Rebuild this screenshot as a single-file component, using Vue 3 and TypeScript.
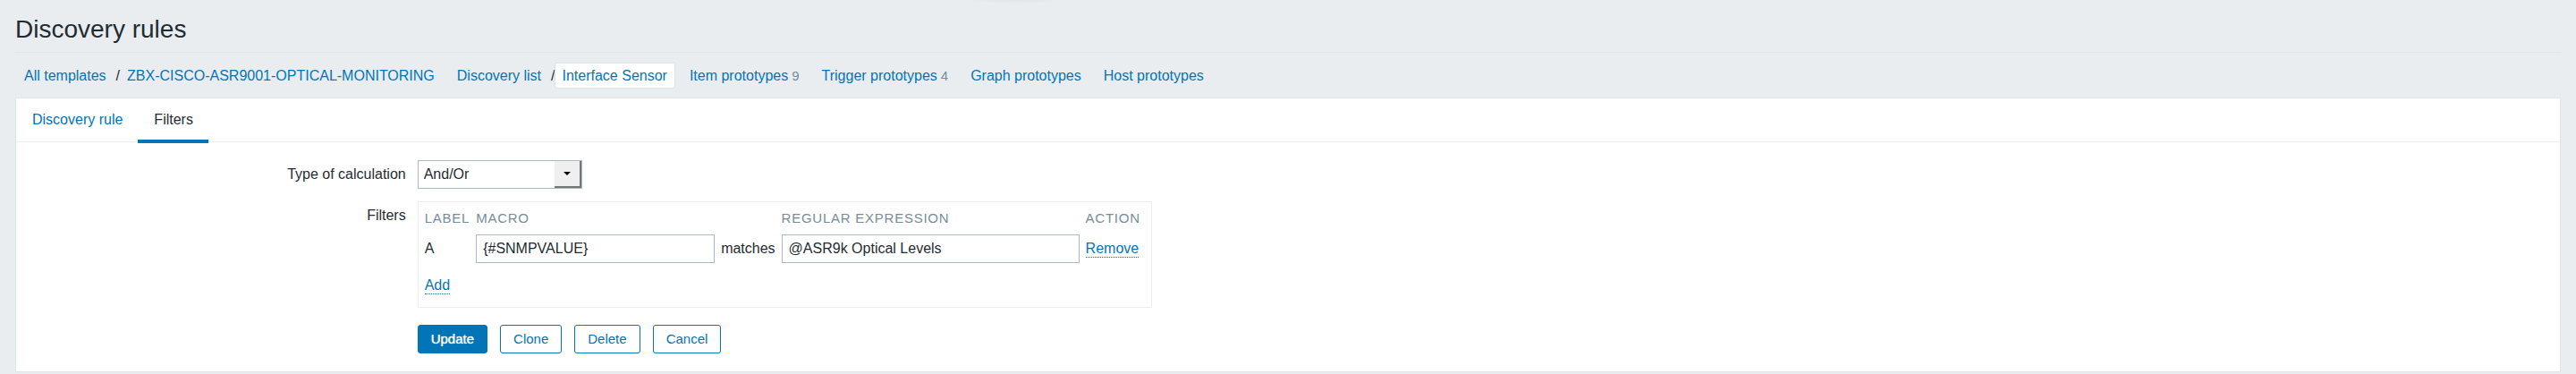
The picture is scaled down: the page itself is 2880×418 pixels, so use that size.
<script setup lang="ts">
import { ref } from 'vue'

interface Crumb {
  label: string
  count?: number
  slash?: boolean
  selected?: boolean
}

interface FilterRow {
  label: string
  macro: string
  expression: string
}

const crumbs: Crumb[] = [
  { label: 'All templates', slash: true },
  { label: 'ZBX-CISCO-ASR9001-OPTICAL-MONITORING' },
  { label: 'Discovery list', slash: true },
  { label: 'Interface Sensor', selected: true },
  { label: 'Item prototypes', count: 9 },
  { label: 'Trigger prototypes', count: 4 },
  { label: 'Graph prototypes' },
  { label: 'Host prototypes' },
]

const tabs = ['Discovery rule', 'Filters']
const activeTab = ref('Filters')
const calculation = ref('And/Or')
const filters = ref<FilterRow[]>([
  { label: 'A', macro: '{#SNMPVALUE}', expression: '@ASR9k Optical Levels' },
])

function addFilter() {
  const label = String.fromCharCode(65 + filters.value.length)
  filters.value.push({ label, macro: '', expression: '' })
}

function removeFilter(index: number) {
  filters.value.splice(index, 1)
}
</script>

<template>
  <div class="page">
    <header class="header">
      <h1>Discovery rules</h1>
    </header>

    <nav class="crumbs" aria-label="Breadcrumb">
      <div v-for="crumb in crumbs" :key="crumb.label" class="crumb-group" :class="{ joined: crumb.slash }">
        <span class="crumb" :class="{ selected: crumb.selected }">
          <a href="#">{{ crumb.label }}</a>
          <span v-if="crumb.count" class="count">{{ crumb.count }}</span>
        </span>
        <span v-if="crumb.slash" class="slash">/</span>
      </div>
    </nav>

    <main class="panel">
      <div class="tabs">
        <a
          v-for="tab in tabs"
          :key="tab"
          href="#"
          class="tab"
          :class="{ active: tab === activeTab }"
          @click.prevent="activeTab = tab"
        >{{ tab }}</a>
      </div>

      <form class="form" @submit.prevent>
        <label class="form-label" for="evaltype">Type of calculation</label>
        <div class="field">
          <div class="select">
            <select id="evaltype" v-model="calculation">
              <option>And/Or</option>
              <option>And</option>
              <option>Or</option>
              <option>Custom expression</option>
            </select>
            <span class="select-arrow" aria-hidden="true">
              <svg width="8" height="4" viewBox="0 0 8 4"><path d="M0 0h8L4 4z" /></svg>
            </span>
          </div>
        </div>

        <span id="filters-label" class="form-label">Filters</span>
        <div class="field">
          <div class="box">
            <table aria-labelledby="filters-label">
              <thead>
                <tr>
                  <th>LABEL</th>
                  <th>MACRO</th>
                  <th></th>
                  <th>REGULAR EXPRESSION</th>
                  <th>ACTION</th>
                </tr>
              </thead>
              <tbody>
                <tr v-for="(row, index) in filters" :key="row.label" class="filter-row">
                  <td>{{ row.label }}</td>
                  <td><input v-model="row.macro" class="macro" type="text" aria-label="Macro"></td>
                  <td>matches</td>
                  <td><input v-model="row.expression" class="expression" type="text" aria-label="Regular expression"></td>
                  <td><button class="link" type="button" @click="removeFilter(index)">Remove</button></td>
                </tr>
                <tr class="add-row">
                  <td colspan="5"><button class="link" type="button" @click="addFilter">Add</button></td>
                </tr>
              </tbody>
            </table>
          </div>
        </div>

        <div class="actions">
          <button class="btn primary" type="submit">Update</button>
          <button class="btn" type="button">Clone</button>
          <button class="btn" type="button">Delete</button>
          <button class="btn" type="button">Cancel</button>
        </div>
      </form>
    </main>
  </div>
</template>

<style>
body {
  background: #e9edf0;
}
</style>

<style scoped>
.page {
  padding: 0 17px 2px;
  background: radial-gradient(ellipse 50px 4px at 1135px 0, #dfe3e6, #e9edf0) no-repeat;
  color: #1f2c33;
  font: 16px/20px "Liberation Sans", Arial, sans-serif;
}

a {
  color: #0275b8;
  text-decoration: none;
}

.header {
  padding: 17px 0 9px;
  border-bottom: 1px solid #dfe4e7;
}

h1 {
  margin: 0;
  font-size: 28px;
  font-weight: normal;
  line-height: 32px;
}

.crumbs {
  display: flex;
  flex-wrap: wrap;
  gap: 9px;
  padding: 12px 2px 11px;
  line-height: 27px;
}

.crumb-group {
  display: flex;
}

.crumb-group.joined {
  margin-right: -9px;
}

.crumb {
  padding: 0 8px;
}

.crumb.selected {
  border-radius: 2px;
  background: #fff;
  box-shadow: 0 0 1px 1px #dfe4e7;
}

.count {
  margin-left: 4px;
  color: #768d99;
  font-size: 15px;
}

.slash {
  margin-left: 3px;
}

.panel {
  border: 1px solid #dfe4e7;
  background: #fff;
}

.tabs {
  display: flex;
  height: 48px;
  border-bottom: 1px solid #ebeef0;
}

.tab {
  height: 44px;
  padding: 2px 17px 0 18px;
  border-bottom: 4px solid transparent;
  line-height: 44px;
}

.tab.active {
  border-bottom-color: #0275b8;
  color: #1f2c33;
}

.form {
  display: grid;
  grid-template-columns: 15% 1fr;
  column-gap: 13px;
  padding: 20px 13px;
}

.form-label {
  line-height: 32px;
  text-align: right;
}

.field {
  margin-bottom: 14px;
}

input,
select {
  box-sizing: border-box;
  height: 32px;
  border: 1px solid #acbbc2;
  border-radius: 0;
  background: #fff;
  color: #1f2c33;
  font: inherit;
}

input {
  display: block;
  padding: 0 7px;
}

.select {
  position: relative;
  width: 184px;
}

select {
  display: block;
  width: 100%;
  padding: 0 34px 0 6px;
  appearance: none;
}

.select-arrow {
  position: absolute;
  top: 1px;
  right: 1px;
  bottom: 1px;
  box-sizing: border-box;
  display: grid;
  place-items: center;
  width: 30px;
  border: solid #767676;
  border-width: 0 2px 2px 0;
  background: #efefef;
  pointer-events: none;
}

.box {
  box-sizing: border-box;
  width: max-content;
  padding: 6px 6px 6px 7px;
  border: 1px solid #ebeef0;
}

.field:has(.box) {
  margin-bottom: 19px;
}

table {
  border-collapse: collapse;
}

th,
td {
  padding: 0 7px 0 0;
  text-align: left;
}

th:last-child,
td:last-child {
  padding-right: 6px;
}

th {
  height: 24px;
  color: #768d99;
  font-size: 15px;
  font-weight: normal;
  letter-spacing: 0.05em;
}

.filter-row td {
  height: 44px;
}

.add-row td {
  height: 37px;
}

.macro {
  width: 267px;
}

.expression {
  width: 333px;
}

.link {
  padding: 0;
  border: 0;
  border-bottom: 1px dotted #0275b8;
  background: none;
  color: #0275b8;
  font: inherit;
  line-height: 18px;
}

.actions {
  grid-column: 2;
  display: flex;
  gap: 14px;
}

.btn {
  height: 32px;
  padding: 0 14px;
  border: 1px solid #0275b8;
  border-radius: 3px;
  background: #fff;
  color: #0275b8;
  font: inherit;
  font-size: 15px;
}

.btn.primary {
  background: #0275b8;
  color: #fff;
  text-shadow: 0 0 1px #fff;
}
</style>
